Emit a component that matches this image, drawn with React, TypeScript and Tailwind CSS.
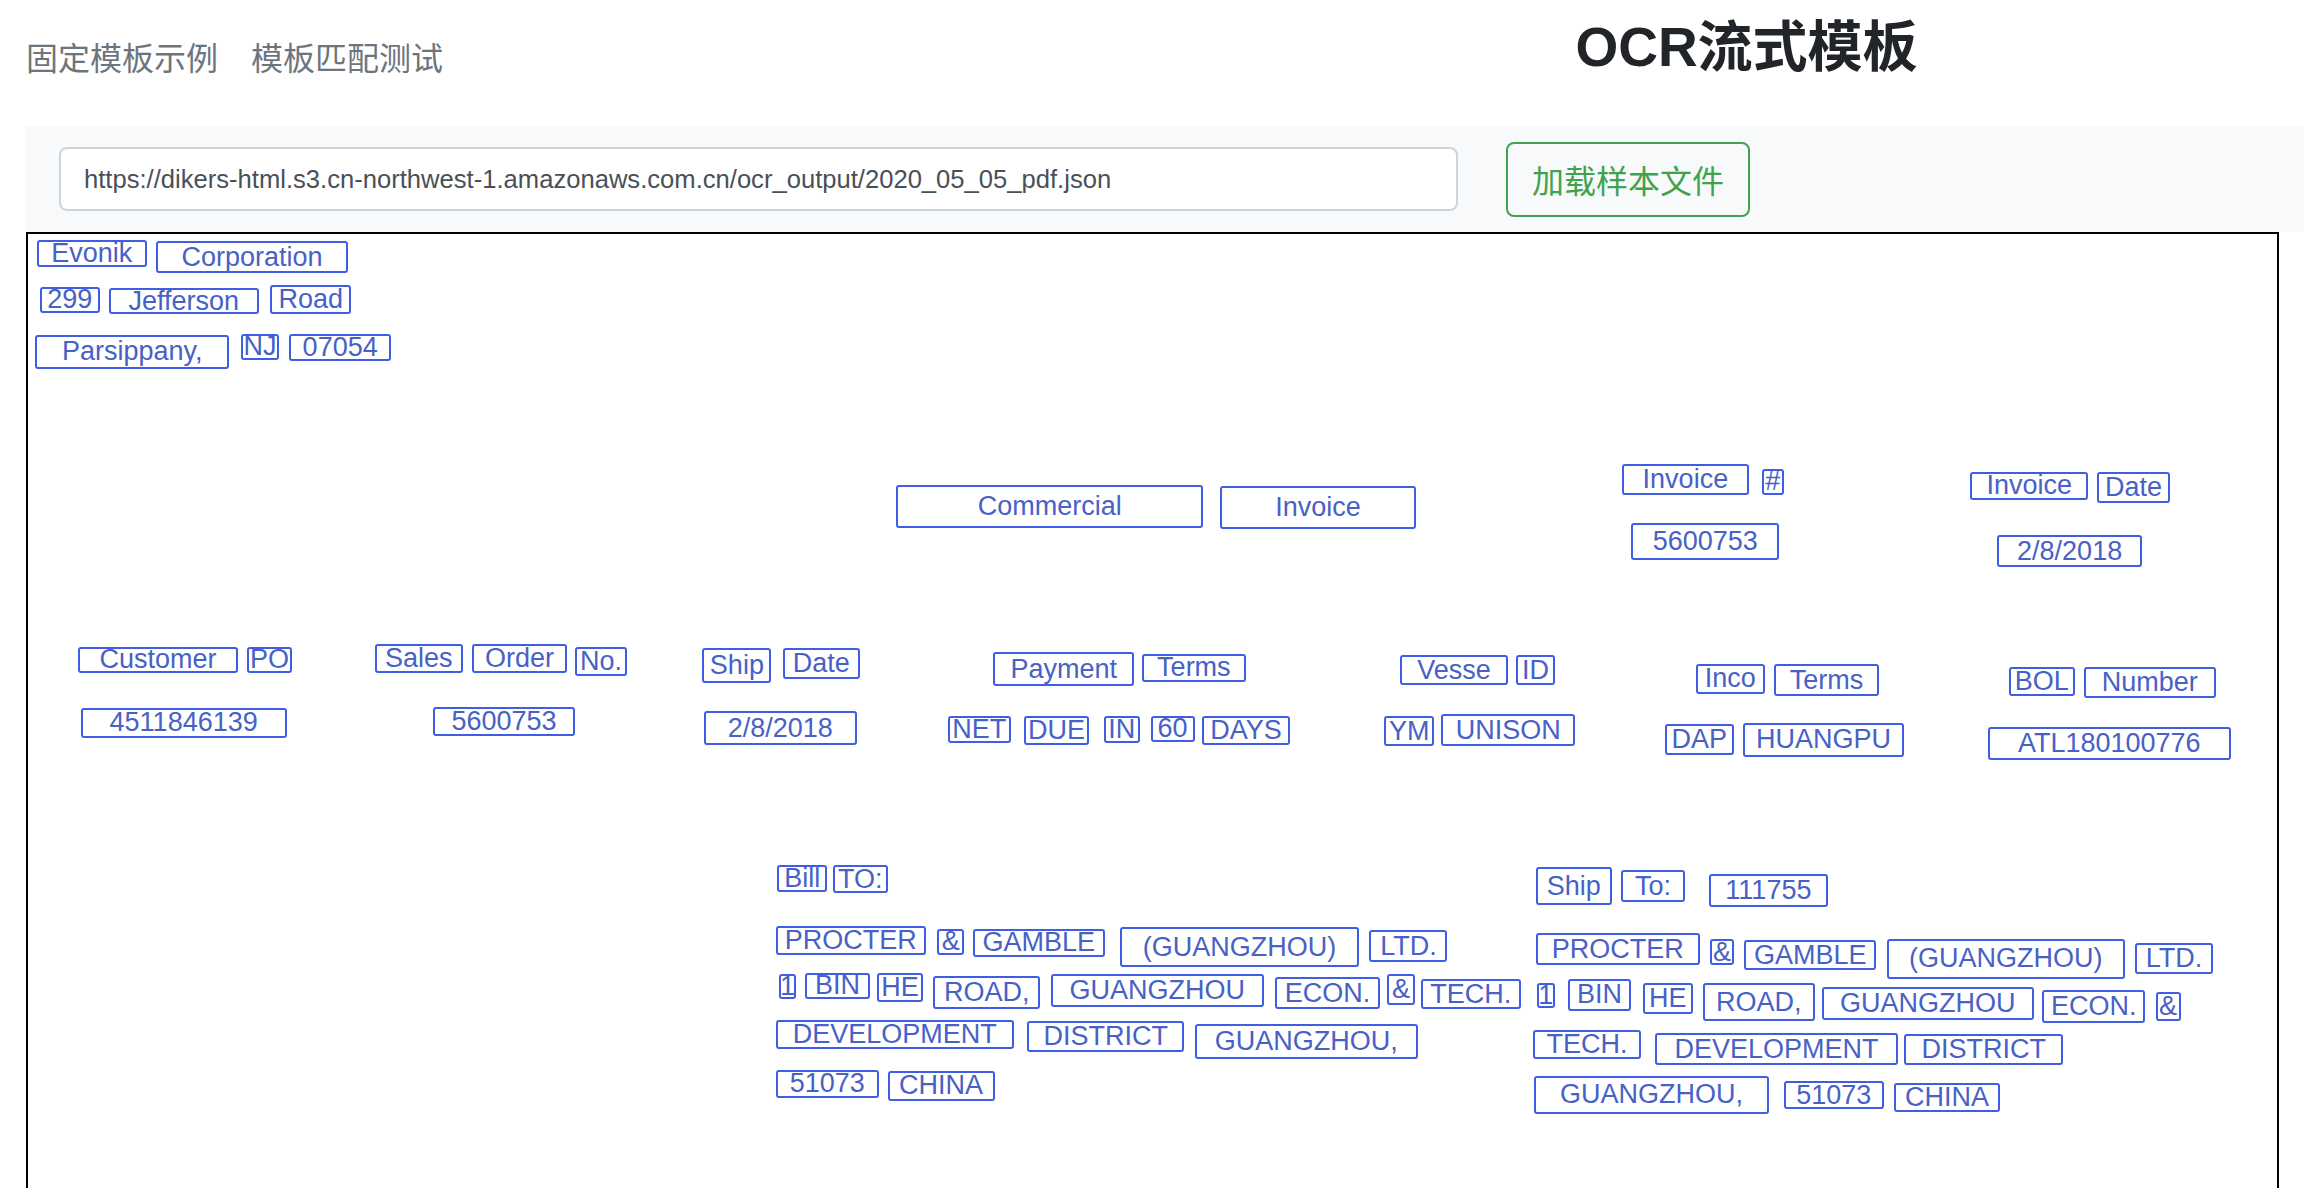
import React from "react";

const S = 2304 / 1568;
const OX = 28;
const OY = 234;

type B = [string, number, number, number, number];

const boxes: B[] = [
  ["Evonik", 25, 163, 100, 182],
  ["Corporation", 106, 164, 237, 186],
  ["299", 27, 195, 68, 213],
  ["Jefferson", 74, 196, 176, 214],
  ["Road", 184, 194, 239, 214],
  ["Parsippany,", 24, 228, 156, 251],
  ["NJ", 164, 227, 190, 245],
  ["07054", 197, 227, 266, 246],
  ["Commercial", 610, 330, 819, 359],
  ["Invoice", 830, 331, 964, 360],
  ["Invoice", 1104, 316, 1190, 337],
  ["#", 1199, 319, 1214, 337],
  ["5600753", 1110, 356, 1211, 381],
  ["Invoice", 1341, 321, 1421, 340],
  ["Date", 1427, 321, 1477, 342],
  ["2/8/2018", 1359, 364, 1458, 386],
  ["Customer", 53, 440, 162, 458],
  ["PO", 168, 440, 199, 458],
  ["Sales", 255, 438, 315, 458],
  ["Order", 321, 438, 386, 458],
  ["No.", 391, 440, 427, 460],
  ["Ship", 478, 441, 525, 465],
  ["Date", 533, 441, 585, 462],
  ["4511846139", 55, 482, 195, 502],
  ["5600753", 295, 481, 391, 501],
  ["2/8/2018", 479, 484, 583, 507],
  ["Payment", 676, 444, 772, 467],
  ["Terms", 777, 445, 848, 464],
  ["NET", 645, 487, 688, 506],
  ["DUE", 697, 487, 741, 507],
  ["IN", 751, 487, 776, 506],
  ["60", 783, 487, 813, 505],
  ["DAYS", 818, 487, 878, 507],
  ["Vesse", 953, 446, 1026, 466],
  ["ID", 1032, 446, 1058, 466],
  ["YM", 942, 487, 976, 508],
  ["UNISON", 981, 486, 1072, 508],
  ["Inco", 1154, 452, 1201, 472],
  ["Terms", 1207, 452, 1279, 474],
  ["DAP", 1133, 493, 1180, 514],
  ["HUANGPU", 1186, 492, 1296, 515],
  ["BOL", 1367, 454, 1412, 474],
  ["Number", 1418, 454, 1508, 475],
  ["ATL180100776", 1353, 495, 1518, 517],
  ["Bill", 529, 589, 563, 607],
  ["TO:", 567, 589, 604, 608],
  ["PROCTER", 528, 630, 630, 650],
  ["&", 638, 632, 656, 650],
  ["GAMBLE", 662, 632, 752, 651],
  ["(GUANGZHOU)", 762, 631, 925, 658],
  ["LTD.", 932, 633, 985, 655],
  ["1", 530, 663, 542, 680],
  ["BIN", 548, 662, 592, 680],
  ["HE", 597, 662, 628, 682],
  ["ROAD,", 635, 664, 708, 687],
  ["GUANGZHOU", 715, 663, 860, 685],
  ["ECON.", 868, 665, 939, 687],
  ["&", 944, 663, 963, 684],
  ["TECH.", 967, 666, 1035, 687],
  ["DEVELOPMENT", 528, 694, 690, 714],
  ["DISTRICT", 699, 695, 806, 716],
  ["GUANGZHOU,", 813, 697, 965, 721],
  ["51073", 528, 728, 598, 747],
  ["CHINA", 604, 729, 677, 749],
  ["Ship", 1045, 590, 1097, 616],
  ["To:", 1103, 592, 1147, 614],
  ["111755", 1163, 595, 1244, 617],
  ["PROCTER", 1045, 635, 1157, 657],
  ["&", 1164, 639, 1180, 657],
  ["GAMBLE", 1187, 640, 1277, 660],
  ["(GUANGZHOU)", 1284, 639, 1446, 666],
  ["LTD.", 1453, 642, 1506, 663],
  ["1", 1046, 669, 1058, 686],
  ["BIN", 1067, 666, 1110, 688],
  ["HE", 1118, 669, 1152, 690],
  ["ROAD,", 1159, 669, 1235, 695],
  ["GUANGZHOU", 1240, 672, 1384, 694],
  ["ECON.", 1390, 674, 1460, 696],
  ["&", 1467, 675, 1484, 695],
  ["TECH.", 1043, 701, 1117, 721],
  ["DEVELOPMENT", 1126, 703, 1292, 725],
  ["DISTRICT", 1296, 704, 1404, 725],
  ["GUANGZHOU,", 1044, 732, 1204, 758],
  ["51073", 1214, 736, 1282, 755],
  ["CHINA", 1289, 737, 1361, 757],
];

export default function App() {
  return (
    <div className="min-h-screen bg-white font-['Liberation_Sans','Noto_Sans_CJK_SC',sans-serif]">
      <div className="grid grid-cols-2 h-[126px] pl-[26px]">
        <div className="flex items-start gap-[33px] pt-[32px] text-[32px] leading-[48px] text-[#6c757d] font-['Noto_Sans_CJK_SC',sans-serif]">
          <a>固定模板示例</a>
          <a>模板匹配测试</a>
        </div>
        <div className="flex justify-center items-start pl-[24px] pt-[11px]">
          <h1 className="text-[55px] leading-[72px] font-bold text-[#212529] font-['Liberation_Sans','Noto_Sans_CJK_SC',sans-serif]">
            OCR流式模板
          </h1>
        </div>
      </div>

      <div className="ml-[26px] h-[106px] bg-[#f8f9fa] flex items-center pl-[33px]">
        <div className="w-[1399px] h-[64px] bg-white border-2 border-[#ced4da] rounded-[8px] flex items-center pl-[23px] text-[25.6px] text-[#495057]">
          https://dikers-html.s3.cn-northwest-1.amazonaws.com.cn/ocr_output/2020_05_05_pdf.json
        </div>
        <button className="ml-[48px] w-[244px] h-[75px] border-2 border-[#3fa34d] rounded-[8px] text-[32px] text-[#3fa34d] font-['Noto_Sans_CJK_SC',sans-serif] flex items-center justify-center">
          加载样本文件
        </button>
      </div>

      <div className="ml-[26px] w-[2253px] h-[1000px] border-2 border-black relative">
        {boxes.map(([t, x1, y1, x2, y2], i) => (
          <div
            key={i}
            className="absolute flex items-center justify-center border-2 border-[#405de6] rounded-[3px] text-[27px] leading-none text-[#4761c6] whitespace-nowrap"
            style={{
              left: x1 * S - OX,
              top: y1 * S - OY,
              width: (x2 - x1) * S,
              height: (y2 - y1) * S,
            }}
          >
            {t}
          </div>
        ))}
      </div>
    </div>
  );
}
